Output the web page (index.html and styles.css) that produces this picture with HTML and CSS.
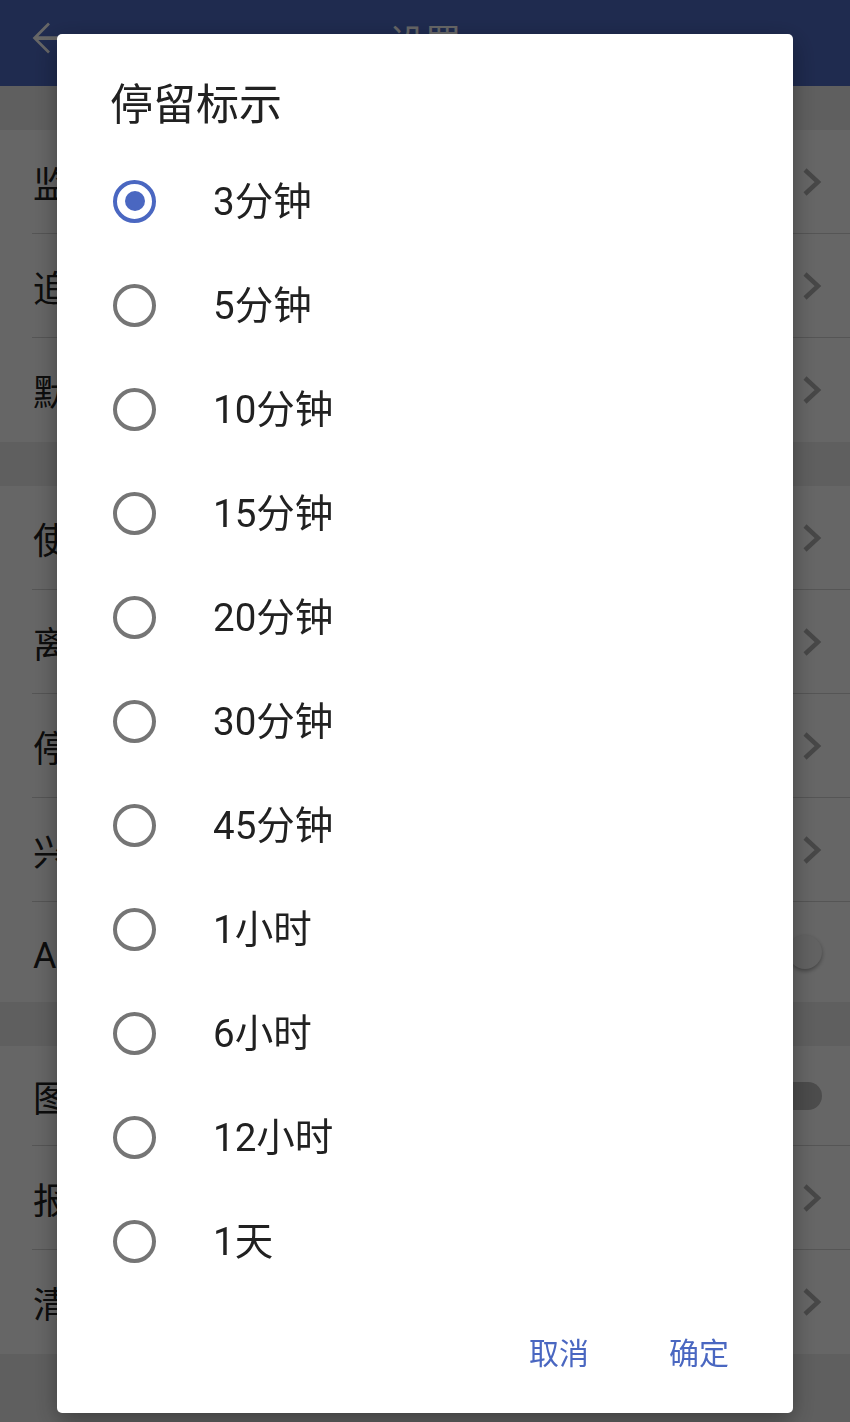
FILE: index.html
```html
<!DOCTYPE html>
<html lang="zh-CN">
<head>
<meta charset="utf-8">
<title>设置</title>
<link rel="stylesheet" href="styles.css">
</head>
<body>
<div class="page">
  <header class="appbar">
    <svg class="back" viewBox="0 0 24 24" width="50" height="50"><path d="M20 11.1H7.83l5.59-5.59L12.5 4.6 5.1 12l7.4 7.4.92-.91L7.83 12.9H20z" fill="#fff"/></svg>
    <div class="appbar-title">设置</div>
  </header>
  <div class="gap"></div>
  <section class="group">
    <div class="row"><span class="label">监控设置</span><svg class="chev" viewBox="0 0 20 30"><polyline points="3,3 16,15 3,27"/></svg></div>
    <div class="row"><span class="label">追踪设置</span><svg class="chev" viewBox="0 0 20 30"><polyline points="3,3 16,15 3,27"/></svg></div>
    <div class="row last"><span class="label">默认地图</span><svg class="chev" viewBox="0 0 20 30"><polyline points="3,3 16,15 3,27"/></svg></div>
  </section>
  <div class="gap"></div>
  <section class="group">
    <div class="row"><span class="label">使用说明</span><svg class="chev" viewBox="0 0 20 30"><polyline points="3,3 16,15 3,27"/></svg></div>
    <div class="row"><span class="label">离线地图</span><svg class="chev" viewBox="0 0 20 30"><polyline points="3,3 16,15 3,27"/></svg></div>
    <div class="row"><span class="label">停留标示</span><svg class="chev" viewBox="0 0 20 30"><polyline points="3,3 16,15 3,27"/></svg></div>
    <div class="row"><span class="label">兴趣点</span><svg class="chev" viewBox="0 0 20 30"><polyline points="3,3 16,15 3,27"/></svg></div>
    <div class="row short last"><span class="label">ACC提醒</span><span class="switch"><span class="thumb"></span></span></div>
  </section>
  <div class="gap"></div>
  <section class="group">
    <div class="row short"><span class="label">图片显示</span><span class="switch off"><span class="track"></span></span></div>
    <div class="row"><span class="label">报警设置</span><svg class="chev" viewBox="0 0 20 30"><polyline points="3,3 16,15 3,27"/></svg></div>
    <div class="row last"><span class="label">清除缓存</span><svg class="chev" viewBox="0 0 20 30"><polyline points="3,3 16,15 3,27"/></svg></div>
  </section>
</div>

<div class="overlay">
  <div class="dialog">
    <div class="dlg-title">停留标示</div>
    <div class="options">
      <div class="opt"><span class="radio checked"></span><span class="opt-text">3分钟</span></div>
      <div class="opt"><span class="radio"></span><span class="opt-text">5分钟</span></div>
      <div class="opt"><span class="radio"></span><span class="opt-text">10分钟</span></div>
      <div class="opt"><span class="radio"></span><span class="opt-text">15分钟</span></div>
      <div class="opt"><span class="radio"></span><span class="opt-text">20分钟</span></div>
      <div class="opt"><span class="radio"></span><span class="opt-text">30分钟</span></div>
      <div class="opt"><span class="radio"></span><span class="opt-text">45分钟</span></div>
      <div class="opt"><span class="radio"></span><span class="opt-text">1小时</span></div>
      <div class="opt"><span class="radio"></span><span class="opt-text">6小时</span></div>
      <div class="opt"><span class="radio"></span><span class="opt-text">12小时</span></div>
      <div class="opt"><span class="radio"></span><span class="opt-text">1天</span></div>
    </div>
    <div class="actions">
      <span class="btn">取消</span>
      <span class="btn">确定</span>
    </div>
  </div>
</div>
</body>
</html>
```

FILE: styles.css
```css
* { box-sizing: border-box; }
html, body {
  margin: 0;
  padding: 0;
  width: 850px;
  height: 1422px;
  overflow: hidden;
  font-family: Roboto, "Noto Sans CJK SC", sans-serif;
  background: #eeeeee;
}
.page {
  width: 850px;
  height: 1422px;
  background: #eeeeee;
}
.appbar {
  height: 86px;
  background: #4e6bc5;
  display: flex;
  align-items: center;
  justify-content: center;
  position: relative;
}
.back {
  position: absolute;
  left: 22px;
  top: 13px;
}
.appbar-title {
  color: #fff;
  font-size: 36px;
  margin-top: -6px;
}
.gap { height: 44px; }
.group { background: #fff; }
.row {
  height: 104px;
  display: flex;
  align-items: center;
  justify-content: space-between;
  padding: 0 28px 0 33px;
  position: relative;
}
.row.short { height: 100px; }
.row::after {
  content: "";
  position: absolute;
  left: 32px;
  right: 0;
  bottom: 0;
  height: 1px;
  background: #d4d4d4;
}
.row.last::after { display: none; }
.label {
  font-size: 36px;
  color: #212121;
}
.chev {
  width: 20px;
  height: 30px;
}
.chev polyline {
  fill: none;
  stroke: #b2b2b2;
  stroke-width: 4.5;
}
.switch {
  width: 60px;
  height: 40px;
  position: relative;
}
.thumb {
  position: absolute;
  right: 0;
  top: 3px;
  width: 34px;
  height: 34px;
  border-radius: 50%;
  background: #f4f4f4;
  box-shadow: 0 2px 4px rgba(0,0,0,0.35);
}
.track {
  position: absolute;
  right: 0;
  top: 6px;
  width: 60px;
  height: 28px;
  border-radius: 14px;
  background: #bdbdbd;
}

.overlay {
  position: fixed;
  inset: 0;
  background: rgba(0,0,0,0.6);
}
.dialog {
  position: absolute;
  left: 57px;
  top: 34px;
  width: 736px;
  height: 1379px;
  background: #fff;
  border-radius: 5px;
  box-shadow: 0 8px 24px rgba(0,0,0,0.35);
  display: flex;
  flex-direction: column;
}
.dlg-title {
  height: 115px;
  padding: 19px 0 0 53px;
  display: flex;
  align-items: center;
  font-size: 43px;
  color: #212121;
}
.options {
  display: flex;
  flex-direction: column;
}
.opt {
  height: 104px;
  display: flex;
  align-items: center;
  padding-left: 56px;
}
.radio {
  width: 43px;
  height: 43px;
  border-radius: 50%;
  border: 4px solid #757575;
  margin-right: 57px;
  position: relative;
  flex: none;
}
.radio.checked { border-color: #4a67c1; }
.radio.checked::after {
  content: "";
  position: absolute;
  left: 7.5px;
  top: 7.5px;
  width: 20px;
  height: 20px;
  border-radius: 50%;
  background: #4a67c1;
}
.opt-text {
  font-size: 38.5px;
  color: #212121;
  padding-bottom: 7px;
}
.actions {
  height: 120px;
  display: flex;
  align-items: center;
  justify-content: flex-end;
  gap: 80px;
  padding: 0 64px 4px 0;
}
.btn {
  font-size: 30px;
  color: #4a67c1;
}
```
